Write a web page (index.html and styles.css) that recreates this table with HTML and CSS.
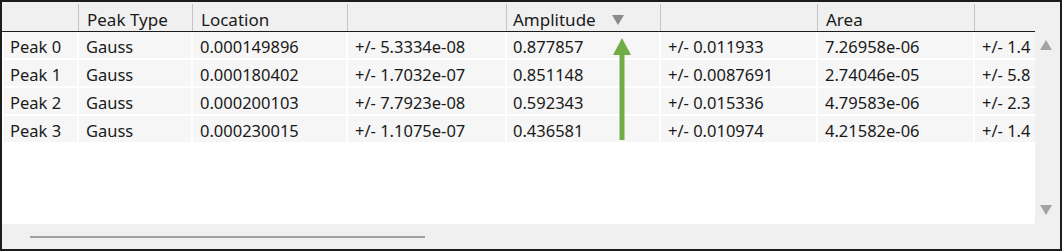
FILE: index.html
```html
<!DOCTYPE html>
<html>
<head>
<meta charset="utf-8">
<link rel="stylesheet" href="styles.css">
</head>
<body>
<div class="frame">
  <div class="viewport">
    <div class="table">
      <div class="hrow">
        <div class="hcell"></div>
        <div class="hcell">Peak Type</div>
        <div class="hcell">Location</div>
        <div class="hcell"></div>
        <div class="hcell sorted">Amplitude<span class="sort"></span></div>
        <div class="hcell"></div>
        <div class="hcell">Area</div>
        <div class="hcell"></div>
      </div>
      <div class="row">
        <div class="cell">Peak 0</div><div class="cell">Gauss</div><div class="cell">0.000149896</div><div class="cell">+/- 5.3334e-08</div><div class="cell">0.877857</div><div class="cell">+/- 0.011933</div><div class="cell">7.26958e-06</div><div class="cell">+/- 1.4</div>
      </div>
      <div class="row">
        <div class="cell">Peak 1</div><div class="cell">Gauss</div><div class="cell">0.000180402</div><div class="cell">+/- 1.7032e-07</div><div class="cell">0.851148</div><div class="cell">+/- 0.0087691</div><div class="cell">2.74046e-05</div><div class="cell">+/- 5.8</div>
      </div>
      <div class="row">
        <div class="cell">Peak 2</div><div class="cell">Gauss</div><div class="cell">0.000200103</div><div class="cell">+/- 7.7923e-08</div><div class="cell">0.592343</div><div class="cell">+/- 0.015336</div><div class="cell">4.79583e-06</div><div class="cell">+/- 2.3</div>
      </div>
      <div class="row">
        <div class="cell">Peak 3</div><div class="cell">Gauss</div><div class="cell">0.000230015</div><div class="cell">+/- 1.1075e-07</div><div class="cell">0.436581</div><div class="cell">+/- 0.010974</div><div class="cell">4.21582e-06</div><div class="cell">+/- 1.4</div>
      </div>
    </div>
    <svg class="arrow" width="20" height="104" viewBox="0 0 20 104">
      <polygon points="10,0 19,17 1,17" fill="#70ad47"/>
      <rect x="7.5" y="16" width="5" height="86" fill="#70ad47"/>
    </svg>
  </div>
  <div class="vscroll">
    <span class="up"></span>
    <span class="down"></span>
  </div>
  <div class="hscroll"><span class="thumb"></span></div>
  <div class="corner"></div>
</div>
</body>
</html>
```

FILE: styles.css
```css
* { box-sizing: border-box; }
html, body { margin: 0; padding: 0; background: #fff; }
body { font-family: "Noto Sans", "Open Sans", sans-serif; font-size: 16.5px; color: #1a1a1a; }

.frame {
  width: 1062px;
  height: 251px;
  border: 2px solid #1c1c1c;
  background: #f0f0f0;
  display: grid;
  grid-template-columns: 1033px 1fr;
  grid-template-rows: 222px 1fr;
  overflow: hidden;
}

.viewport {
  position: relative;
  background: #fff;
  overflow: hidden;
  border-bottom-right-radius: 3px;
}

.table { width: 1140px; }

.hrow, .row {
  display: grid;
  grid-template-columns: 77px 114px 155px 159px 154px 157px 157px 167px;
}

.hrow {
  height: 30px;
  background: #f0f0f0;
  border-bottom: 1px solid #1c1c1c;
}

.hcell {
  display: flex;
  align-items: center;
  padding-left: 8px;
  padding-top: 3px;
  border-right: 1px solid #c4c4c4;
  margin-top: 2px;
  white-space: nowrap;
  font-size: 17px;
}
.hcell.sorted { padding-left: 6px; }

.sort {
  margin-left: 16px;
  width: 0; height: 0;
  border-left: 6px solid transparent;
  border-right: 6px solid transparent;
  border-top: 10px solid #8a8a8a;
  margin-top: 1px;
}

.row { height: 28px; }

.cell {
  background: #f6f6f6;
  border-right: 2px solid #fff;
  border-bottom: 2px solid #fff;
  padding-left: 7px;
  padding-top: 3px;
  display: flex;
  align-items: center;
  white-space: nowrap;
  overflow: hidden;
}
.row .cell:first-child { padding-left: 6px; margin-left: 2px; }
.row .cell:nth-child(5) { padding-left: 6px; }

.arrow {
  position: absolute;
  left: 610px;
  top: 36px;
}

.vscroll {
  position: relative;
  background: #f0f0f0;
}
.up, .down {
  position: absolute;
  left: 5px;
  width: 0; height: 0;
  border-left: 6px solid transparent;
  border-right: 6px solid transparent;
}
.up { top: 38px; border-bottom: 10px solid #a3a3a3; }
.down { top: 203px; border-top: 10px solid #a3a3a3; }

.hscroll {
  display: flex;
  align-items: center;
  padding-left: 28px;
}
.thumb {
  width: 395px;
  height: 2px;
  background: #a0a0a0;
  margin-top: 1px;
}
.corner { background: #f0f0f0; }
```
